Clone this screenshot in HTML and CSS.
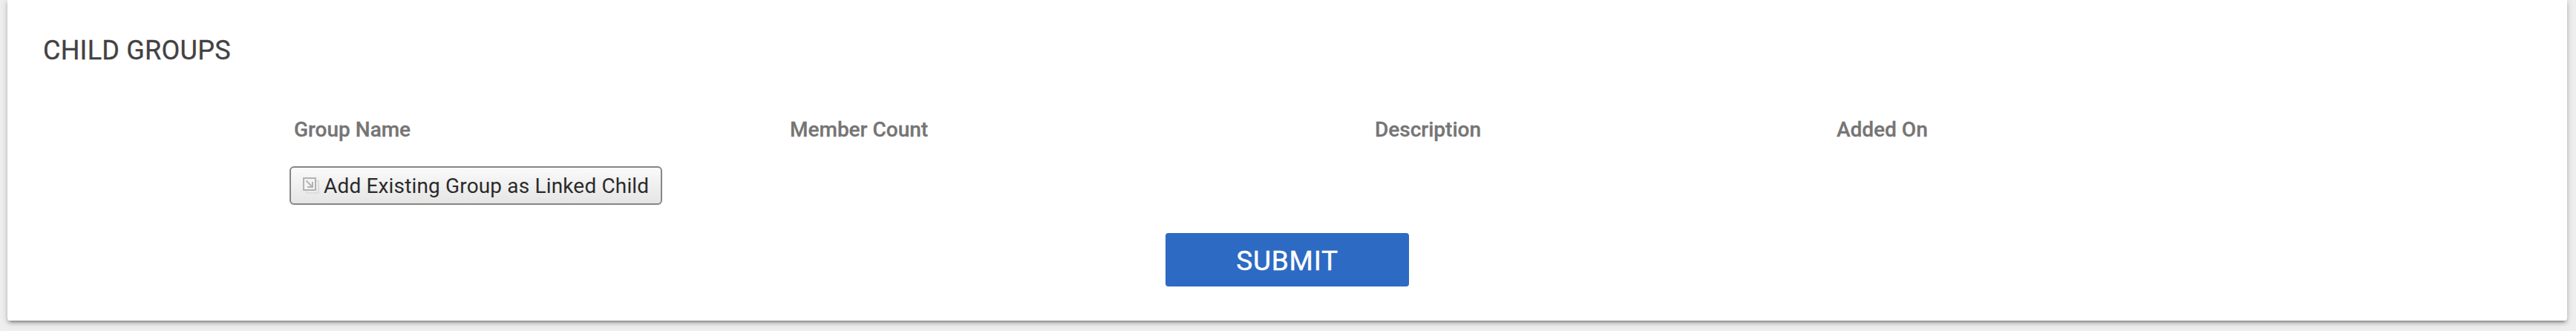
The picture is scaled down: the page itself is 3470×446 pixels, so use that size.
FILE: index.html
```
<!DOCTYPE html>
<html lang="en">
<head>
    <meta charset="UTF-8">
    <title>Child Groups</title>
    <link rel="stylesheet" href="styles.css">
</head>
<body>
    <div class="card">
        <h2>CHILD GROUPS</h2>
        <div class="groups">
            <div class="group-head">
                <span>Group Name</span>
                <span>Member Count</span>
                <span>Description</span>
                <span>Added On</span>
            </div>
            <button class="btn-add" type="button">
                <svg class="add-icon" viewBox="0 0 22 22" fill="none">
                    <path d="M18 5h3v16H5v-3" stroke="#dedede" stroke-width="2"/>
                    <path d="M1 1h16v16H1z" fill="#f4f4f4" stroke="#b3b3b3" stroke-width="2"/>
                    <path d="M4.5 4.5l8 8M13 6v7H6" stroke="#b3b3b3" stroke-width="2"/>
                </svg>
                Add Existing Group as Linked Child
            </button>
        </div>
        <button class="btn-submit" type="submit">SUBMIT</button>
    </div>
</body>
</html>
```
FILE: styles.css
```
* {
    margin: 0;
    padding: 0;
    box-sizing: border-box;
}

body {
    font-family: Roboto, sans-serif;
    background: #eee;
    color: #424242;
    height: 446px;
    overflow: hidden;
}

.card {
    width: 3448px;
    height: 432px;
    margin-left: 10px;
    padding: 46px 48px 0;
    background: #fff;
    border-radius: 0 0 4px 4px;
    box-shadow: 0 4px 4px rgba(0, 0, 0, 0.14), 0 6px 2px -4px rgba(0, 0, 0, 0.2), 0 2px 10px rgba(0, 0, 0, 0.18);
}

h2 {
    font-size: 36px;
    font-weight: 400;
    line-height: 44px;
    letter-spacing: 0.25px;
    -webkit-text-stroke: 0.3px #424242;
}

.groups {
    margin: 65px 0 0 332px;
}

.group-head {
    display: grid;
    grid-template-columns: 668px 788px 622px 1fr;
    padding-left: 6px;
    font-size: 28px;
    font-weight: 500;
    line-height: 40px;
    color: #757575;
    -webkit-text-stroke: 0.3px #757575;
}

.btn-add {
    display: flex;
    align-items: center;
    gap: 6px;
    width: 502px;
    height: 52px;
    margin-top: 29px;
    padding-left: 16px;
    font: 28px Roboto, sans-serif;
    letter-spacing: 0.16px;
    white-space: nowrap;
    color: #2b2b2b;
    background: linear-gradient(#fafafa, #e5e5e5);
    border: 2px solid #858585;
    border-radius: 6px;
}

.add-icon {
    flex: none;
    width: 22px;
    height: 22px;
}

.btn-submit {
    display: block;
    width: 328px;
    height: 72px;
    margin: 38px auto 0;
    padding-top: 3px;
    font: 400 37px Roboto, sans-serif;
    letter-spacing: 0.8px;
    color: #fff;
    background: #2d6ac3;
    border: none;
    border-radius: 4px;
    -webkit-text-stroke: 0.4px #fff;
}
```
